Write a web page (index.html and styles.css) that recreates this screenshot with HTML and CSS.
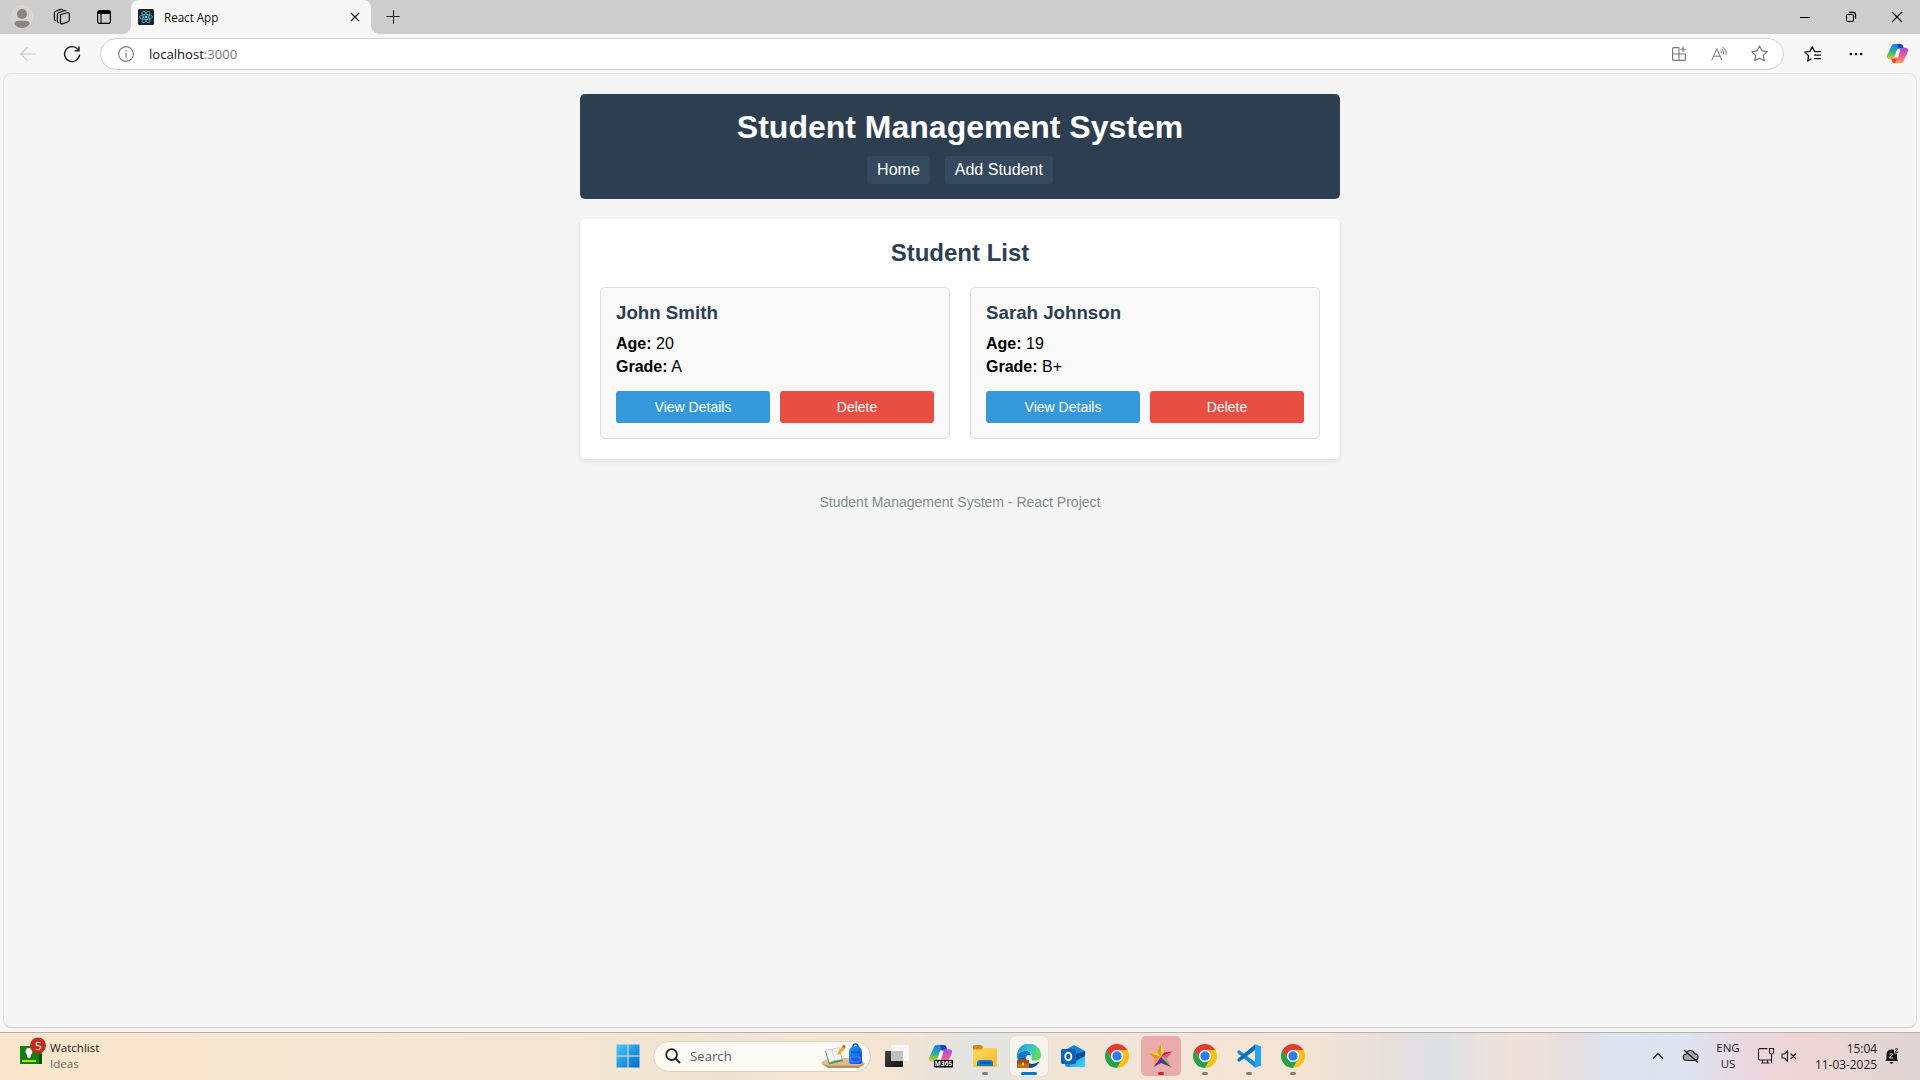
FILE: index.html
```html
<!DOCTYPE html>
<html lang="en">
<head>
<meta charset="utf-8">
<title>React App</title>
<link rel="stylesheet" href="styles.css">
</head>
<body>
<svg class="defs" width="0" height="0" aria-hidden="true">
  <defs>
    <linearGradient id="win" x1="0" y1="0" x2="1" y2="1"><stop offset="0" stop-color="#4cc8fb"/><stop offset="1" stop-color="#0069c8"/></linearGradient>
    <linearGradient id="copL" x1="0" y1="0" x2="0" y2="1"><stop offset="0" stop-color="#1d7de6"/><stop offset=".45" stop-color="#22a5b8"/><stop offset=".75" stop-color="#7fc24a"/><stop offset="1" stop-color="#f3c71f"/></linearGradient>
    <linearGradient id="copR" x1="0" y1="0" x2="0" y2="1"><stop offset="0" stop-color="#a24be0"/><stop offset=".5" stop-color="#ec5a94"/><stop offset="1" stop-color="#fd9c5a"/></linearGradient>
    <linearGradient id="folder" x1="0" y1="0" x2="1" y2="1"><stop offset="0" stop-color="#ffdc69"/><stop offset="1" stop-color="#fbb92a"/></linearGradient>
    <linearGradient id="edgeTop" x1="0" y1="0" x2="1" y2=".3"><stop offset="0" stop-color="#1b8fd6"/><stop offset=".5" stop-color="#2fbfd3"/><stop offset="1" stop-color="#5fdc5a"/></linearGradient>
    <linearGradient id="bag" x1="0" y1="0" x2="1" y2="1"><stop offset="0" stop-color="#1aa0ff"/><stop offset="1" stop-color="#0748d8"/></linearGradient>
    <linearGradient id="dark" x1="0" y1="0" x2="1" y2="1"><stop offset="0" stop-color="#444"/><stop offset="1" stop-color="#111"/></linearGradient>
    <linearGradient id="outl" x1="0" y1="0" x2="1" y2="1"><stop offset="0" stop-color="#1a86dc"/><stop offset="1" stop-color="#41d8fb"/></linearGradient>
    <symbol id="copilot" viewBox="0 0 24 24" preserveAspectRatio="none">
      <path d="M6 2.5Q7 1 9 1H15Q17 1 17.6 3L18.4 6H14Q12 6 11.3 8.2L9.2 15Q8 18.5 5 18.5H4Q0 18.5 1.2 14Z" fill="url(#copL)"/>
      <path d="M11.5 1H15Q17 1 17.6 3L18.4 6H14Q13 6 12.4 6.6Z" fill="#1745c4"/>
      <path d="M18 21.5Q17 23 15 23H9Q7 23 6.4 21L5.6 18Q9 18 10 14.8L12.6 8.5Q13.8 5.5 17 5.5H20Q24 5.5 22.8 10Z" fill="url(#copR)"/>
      <path d="M5.6 18H10L11 17.5 9.5 23H9Q7 23 6.4 21Z" fill="#e8412f"/>
      <path d="M12 7.5H15L12.5 16.5H9.3Z" fill="#fff"/>
    </symbol>
    <symbol id="chrome" viewBox="0 0 24 24">
      <path d="M1.6 6A12 12 0 0 1 22.4 6H12A6 6 0 0 0 6.8 15Z" fill="#e33b2e"/>
      <path d="M22.4 6A12 12 0 0 1 12 24L17.2 15A6 6 0 0 0 12 6Z" fill="#fcc117"/>
      <path d="M12 24A12 12 0 0 1 1.6 6L6.8 15A6 6 0 0 0 17.2 15Z" fill="#26a148"/>
      <circle cx="12" cy="12" r="5.9" fill="#fff"/><circle cx="12" cy="12" r="4.7" fill="#2f7de9"/>
    </symbol>
  </defs>
</svg>

<div class="browser">
  <div class="tabstrip">
    <div class="slot avatar-slot"><svg width="22" height="24" viewBox="0 0 22 24"><ellipse cx="11" cy="12" rx="10.5" ry="11.3" fill="#d6d3d0" stroke="#dfdcd8" stroke-width=".8"/><circle cx="11" cy="9" r="5" fill="#8b8682"/><path d="M3 18.5Q4 15.8 7 15.8H15Q18 15.8 19 18.5Q16 23 11 23T3 18.5Z" fill="#8b8682"/></svg></div>
    <div class="slot space-slot"><svg width="18" height="18" viewBox="0 0 18 18" fill="none" stroke="#111" stroke-width="1.2" stroke-linejoin="round"><path d="M7.5 6.8L14 4.7Q16.3 4.3 16.3 6V12Q16.3 13.3 15 13.8L9.5 15.9Q7.500 16.2 7.5 14.5Z"/><path d="M6.3 14.5Q4.4 14.8 4.4 12.8V6.5Q4.4 5.3 5.6 4.7L11 2.6Q12.8 2.2 13.2 3.4"/><path d="M3.2 12.8Q1.4 12.6 1.4 11V5Q1.4 3.8 2.6 3.2L7.5 1.4Q9.4.9 10 1.9"/></svg></div>
    <div class="slot tabs-slot"><svg width="16" height="16" viewBox="0 0 16 16"><rect x="1.6" y="1.6" width="12.8" height="12.8" rx="2.2" fill="none" stroke="#000" stroke-width="1.2"/><path d="M1.6 5V3.5Q1.6 1.6 3.5 1.6H12.5Q14.4 1.6 14.4 3.5V5Z"/><path d="M5 5V14" stroke="#000" stroke-width="1.1"/></svg></div>
    <div class="tab">
      <svg class="favicon" width="16" height="16" viewBox="0 0 16 16"><rect width="16" height="16" rx="1.5" fill="#20232a"/><g fill="none" stroke="#58bfd8" stroke-width=".8"><ellipse cx="8" cy="8" rx="6.5" ry="2.5"/><ellipse cx="8" cy="8" rx="6.5" ry="2.5" transform="rotate(60 8 8)"/><ellipse cx="8" cy="8" rx="6.5" ry="2.5" transform="rotate(120 8 8)"/></g><circle cx="8" cy="8" r="1.3" fill="#7bdcf0"/></svg>
      <span class="tab-title">React App</span>
      <svg class="tab-close" width="10" height="10" viewBox="0 0 10 10"><path d="M1 1L9 9M9 1L1 9" stroke="#222" stroke-width="1.3"/></svg>
    </div>
    <svg class="new-tab" width="14" height="14" viewBox="0 0 14 14"><path d="M7.5 .3V13.7M.3 6.5H13.7" stroke="#222" stroke-width="1.1"/></svg>
    <div class="window-buttons">
      <svg width="12" height="12" viewBox="0 0 12 12"><path d="M1 6.5H11" stroke="#000"/></svg>
      <svg width="12" height="12" viewBox="0 0 12 12" fill="none" stroke="#000" stroke-width="1.1"><rect x="1.5" y="3.5" width="7" height="7" rx="1.5"/><path d="M4 1.4H8.2Q10.6 1.4 10.6 3.8V8"/></svg>
      <svg width="12" height="12" viewBox="0 0 12 12"><path d="M1 1L11 11M11 1L1 11" stroke="#000" stroke-width="1.1"/></svg>
    </div>
  </div>

  <div class="toolbar">
    <div class="slot back-slot"><svg width="16" height="16" viewBox="0 0 16 16" fill="none" stroke="#c4c4c4" stroke-width="1.1"><path d="M16 8H.8M7.5 1.2L.8 8L7.5 14.8"/></svg></div>
    <div class="slot reload-slot"><svg width="18" height="18" viewBox="0 0 18 18" fill="none" stroke="#1a1a1a" stroke-width="1.4"><path d="M16.6 9.5A7.5 7.5 0 1 1 14.8 4.2L16 5.5M16 1.2V5.7H11.5"/></svg></div>
    <div class="address">
      <svg class="info" width="16" height="16" viewBox="0 0 16 16"><circle cx="8" cy="8" r="7.4" fill="none" stroke="#767676" stroke-width="1.1"/><path d="M8 7V11.5M8 4.3V5.6" stroke="#767676" stroke-width="1.2"/></svg>
      <span class="url">localhost<span class="port">:3000</span></span>
      <div class="address-actions">
        <svg width="16" height="16" viewBox="0 0 16 16" fill="none" stroke="#757575" stroke-width="1.1"><path d="M8 1.6H2.6Q1.6 1.6 1.6 2.6V13.4Q1.6 14.4 2.6 14.4H13.4Q14.4 14.4 14.4 13.4V8H1.6M8 1.6V14.4M12 .5V6M9.3 3.2H14.8"/></svg>
        <svg width="17" height="16" viewBox="0 0 17 16" fill="none" stroke="#757575" stroke-width="1"><path d="M.8 14.200L5.800 2.600L10.800 14.200M2.500 10.200H9.100M9.300 4.300Q10.600 5.400 10.400 7.200M10.300 2.600Q13 4.400 12.600 8M11.400.8Q15.600 3.600 15 8.600"/></svg>
        <svg width="17" height="17" viewBox="0 0 16 16" fill="none" stroke="#757575" stroke-width="1.1" stroke-linejoin="round"><path d="M8 .9L10.2 5.5L15.3 6.2L11.6 9.7L12.5 14.8L8 12.4L3.5 14.8L4.4 9.7L.7 6.2L5.8 5.5Z"/></svg>
      </div>
    </div>
    <div class="browser-actions">
      <svg width="17" height="16" viewBox="0 0 17 16" fill="none" stroke="#111" stroke-width="1.3" stroke-linejoin="round"><path d="M12 5.6L10.5 5.4L8.2.8L6 5.4L.8 6.1L4.6 9.7L3.7 15L7.5 12.8M11 5.6H17M10 9.1H17M10 12.6H17"/></svg>
      <svg width="14" height="4" viewBox="0 0 14 4"><circle cx="1.8" cy="2" r="1.3"/><circle cx="7" cy="2" r="1.3"/><circle cx="12.2" cy="2" r="1.3"/></svg>
      <svg width="23" height="21"><use href="#copilot" width="23" height="21"/></svg>
    </div>
  </div>

  <main class="viewport">
    <div class="app">
      <header class="app-header">
        <h1>Student Management System</h1>
        <nav class="app-nav"><a>Home</a><a>Add Student</a></nav>
      </header>
      <section class="student-list">
        <h2>Student List</h2>
        <div class="cards">
          <article class="card">
            <h3>John Smith</h3>
            <p><strong>Age:</strong> 20</p>
            <p><strong>Grade:</strong> A</p>
            <div class="card-actions"><button class="btn view">View Details</button><button class="btn delete">Delete</button></div>
          </article>
          <article class="card">
            <h3>Sarah Johnson</h3>
            <p><strong>Age:</strong> 19</p>
            <p><strong>Grade:</strong> B+</p>
            <div class="card-actions"><button class="btn view">View Details</button><button class="btn delete">Delete</button></div>
          </article>
        </div>
      </section>
      <footer class="app-footer">Student Management System - React Project</footer>
    </div>
  </main>
</div>

<div class="taskbar">
  <div class="widgets">
    <svg width="26" height="28" viewBox="0 0 26 28"><rect y="9" width="22" height="18" fill="#118011"/><path d="M19 17H22V27H19Z" fill="#075407"/><circle cx="9" cy="14.5" r="3.4" fill="#fff"/><path d="M7 16H11V20L9 21.5L7 20Z" fill="#fff"/><path d="M2 23H16V25H2Z" fill="#b9e000"/><circle cx="18" cy="8.5" r="8" fill="#c42b1c"/><text class="badge" x="18.2" y="12.5" text-anchor="middle">5</text></svg>
    <div class="widget-text"><span>Watchlist</span><span class="muted">Ideas</span></div>
  </div>
  <div class="apps">
    <div class="app-icon"><svg width="24" height="24" viewBox="0 0 24 24"><path d="M.5.5H11.5V11.5H.5ZM12.5.5H23.5V11.5H12.5ZM.5 12.5H11.5V23.5H.5ZM12.5 12.5H23.5V23.5H12.5Z" fill="url(#win)"/></svg></div>
    <div class="search">
      <svg width="16" height="16" viewBox="0 0 16 16" fill="none" stroke="#222" stroke-width="1.8"><circle cx="6.6" cy="6.6" r="5.4"/><path d="M10.5 10.5L15 15"/></svg>
      <span>Search</span>
      <svg class="search-art" width="44" height="26" viewBox="0 0 44 26"><path d="M0 20Q3 16 12 15H34Q42 16 43.5 20L38 24H7Z" fill="#e3bc8e"/><path d="M0 20.5L7 22.5H38L43.5 20V21L38 25H7Z" fill="#bd8f5e"/><path d="M4 8L18 5L22 18L8 21.5Z" fill="#3f9e53"/><path d="M4.500 6.5L11 6L18 4.5L21 16.5L14 17.5L8.5 19.5Z" fill="#f3f2f7" stroke="#b9b7c7" stroke-width=".5"/><path d="M11 6L14 17.5" stroke="#ccc" stroke-width=".7"/><path d="M16 12L17 9L21.5 3.5L24 5.5L19 11Z" fill="#fba61c"/><path d="M21 4L22.5 1.5L24.500 3L24 5.5Z" fill="#ed4b3e"/><path d="M32 4Q32 1 34.5 1T37 4" fill="none" stroke="#0a56c8" stroke-width="1.6"/><path d="M28 10Q28 3 34.500 3T41 10V19Q41 21 39 21H30Q28 21 28 19Z" fill="url(#bag)"/><path d="M30 14H39V17Q39 19 37 19H32Q30 19 30 17Z" fill="#2453ef" stroke="#6e9dff" stroke-width=".7"/><path d="M30 9H39" stroke="#0746b0"/></svg>
    </div>
    <div class="app-icon"><svg width="24" height="22" viewBox="0 0 24 22"><rect y="6" width="18" height="16" rx="1" fill="url(#dark)"/><rect x="6" width="18" height="16" rx="1" fill="#f7f7f7"/><path d="M6 6H18V16H6Z" fill="#c0c0bf"/></svg></div>
    <div class="app-icon"><svg width="26" height="24" viewBox="0 0 26 24"><use href="#copilot" width="25" height="23"/><rect x="6" y="16" width="19" height="7.500" rx=".8"/><text class="m365" x="15.5" y="22" text-anchor="middle">M365</text></svg></div>
    <div class="app-icon open"><svg width="24" height="22" viewBox="0 0 24 22"><path d="M0 1.5Q0 0 1.5 0H8L11 3H22.5Q24 3 24 4.5V20.5Q24 22 22.5 22H1.5Q0 22 0 20.5Z" fill="url(#folder)"/><path d="M0 1.5Q0 0 1.5 0H8L10 2L8.5 4.5H0Z" fill="#d58c08"/><path d="M4 21V18Q4 15 7 15H17Q20 15 20 18V21Z" fill="#1379cb"/><path d="M7 18H17" stroke="#0a589e" stroke-width="1.5"/></svg></div>
    <div class="app-icon active"><svg width="24" height="24" viewBox="0 0 24 24"><path d="M0 12Q2 7 9 6.800Q14 7.500 14 11.500Q9.500 9.500 9 14Q9 19.500 15 20Q19 20 22.500 17.500Q19 24 12 24Q1 24 0 12Z" fill="#1178c8"/><path d="M9 14Q9 19.500 15 20Q19 20 22.500 17.500Q19 24 12 24Q8 23 8 17Z" fill="#0d4a94"/><path d="M0 12A12 12 0 0 1 24 11Q24 16.500 18.500 16.800Q14 17 14.500 14.500Q15.500 7 9 6.800Q3 6.800 0 12Z" fill="url(#edgeTop)"/><path d="M0 16H12V24H0Z" fill="#c96a16"/><path d="M0 16H12V19.5H0Z" fill="#a34f0a"/><path d="M4 16V14.500H8V16" fill="none" stroke="#7b3b08"/><rect x="5" y="18.5" width="2" height="3" fill="#ffd04a"/></svg></div>
    <div class="app-icon"><svg width="24" height="22" viewBox="0 0 24 22"><path d="M4 5L13 0L24 6V19.5Q24 22 21.5 22H7Q4 22 4 19Z" fill="#1684d8"/><path d="M24 7V19.500Q24 22 21.5 22H7L24 10Z" fill="url(#outl)"/><path d="M14 9L24 6.5V11L14 16Z" fill="#0c4d96"/><rect y="4" width="15" height="15" rx="1.5" fill="#0f62b8"/><ellipse cx="7.3" cy="11.5" rx="3" ry="3.7" fill="none" stroke="#fff" stroke-width="1.9"/></svg></div>
    <div class="app-icon"><svg width="24" height="24"><use href="#chrome"/></svg></div>
    <div class="app-icon alert"><svg width="24" height="24" viewBox="0 0 24 24"><path d="M12 0L12 13L8.5 8.5Z" fill="#d89b12"/><path d="M12 0L15 8.5L12 13Z" fill="#ffd83d"/><path d="M.5 9L8.5 8.5L12 13Z" fill="#ffcf24"/><path d="M.5 9L12 13L6 15Z" fill="#e88b1a"/><path d="M15 8.5L23.5 7.5L12 13Z" fill="#c9224a"/><path d="M23.5 7.5L18 14L12 13Z" fill="#e95878"/><path d="M6 15L12 13L4.5 23Z" fill="#ff9a32"/><path d="M12 13L12 19L4.5 23Z" fill="#5425d6"/><path d="M12 13L18 14L22 23Z" fill="#a0a0a0"/><path d="M12 13L22 23L12 19Z" fill="#4a4a4a"/></svg></div>
    <div class="app-icon open"><svg width="24" height="24"><use href="#chrome"/></svg></div>
    <div class="app-icon open"><svg width="24" height="24" viewBox="0 0 24 24"><path d="M2 6L18 18V23.5L.5 9V7.5Z" fill="#1089d6"/><path d="M2 18L18 6V.5L.5 15V16.5Z" fill="#0870b8"/><path d="M18 0L24 2.5V21.500L18 24Z" fill="#25a3ee"/></svg></div>
    <div class="app-icon open"><svg width="24" height="24"><use href="#chrome"/></svg></div>
  </div>
  <div class="tray">
    <svg width="12" height="8" viewBox="0 0 12 8"><path d="M1 6.7L6 1.5L11 6.7" fill="none" stroke="#222" stroke-width="1.3"/></svg>
    <svg class="cloud" width="18" height="14" viewBox="0 0 18 14"><path d="M5 11.5H12.5Q16 11 16 8T12.5 4.7Q11.5 1.5 8.3 1.5T4.3 5Q1.2 5.2 1.2 8.2T5 11.5Z" fill="#a5a6a9" stroke="#222" stroke-width="1.2"/><path d="M2 1L16 13.5" stroke="#222" stroke-width="1.4"/></svg>
    <div class="lang"><span>ENG</span><span>US</span></div>
    <svg class="net" width="18" height="18" viewBox="0 0 18 18" fill="none" stroke="#222" stroke-width="1.1"><path d="M10.500 1.6H3Q1.5 1.6 1.5 3V11.5Q1.5 13 3 13H14.5M5.500 13V16M10.5 13V16M4 16H12.5M12.5 1.5H16.5V5.5Q16.5 7 14.5 7T12.5 5.5ZM14.5 7V16"/></svg>
    <svg class="sound" width="16" height="12" viewBox="0 0 16 12" fill="none" stroke="#222" stroke-width="1.1"><path d="M1 4H3.5L6.5 1V11L3.5 8H1ZM9.5 3.5L15 9M15 3.5L9.5 9"/></svg>
    <div class="clock"><span>15:04</span><span>11-03-2025</span></div>
    <svg class="bell" width="14" height="16" viewBox="0 0 14 16"><path d="M1.5 11V6Q2 1.500 6.5 1.5H9V5.500H12V11L13 13H0ZM4.5 14H8.5Q8 15.7 6.5 15.7T4.5 14Z" fill="#151515"/><path d="M4.500 6H7.800L4.500 10H8" fill="none" stroke="#eadbd9" stroke-width="1"/><path d="M10 1H13L10 4.200H13.300" fill="none" stroke="#151515" stroke-width="1"/></svg>
  </div>
</div>
</body>
</html>
```
FILE: styles.css
```css
* { box-sizing: border-box; margin: 0; padding: 0; }

body {
  width: 1920px;
  height: 1080px;
  overflow: hidden;
  display: flex;
  flex-direction: column;
  font-family: "Open Sans", "Noto Sans", sans-serif;
}

svg { display: block; flex: none; }
.defs { position: absolute; }

/* Browser chrome */
.browser {
  height: 1032px;
  display: flex;
  flex-direction: column;
  background: #f7f7f7;
}

.tabstrip {
  height: 34px;
  flex: none;
  display: flex;
  align-items: center;
  background: #cdcdcd;
}

.slot { display: flex; justify-content: center; flex: none; }
.avatar-slot { width: 44px; }
.space-slot { width: 36px; }
.tabs-slot { width: 48px; }

.tab {
  width: 240px;
  height: 34px;
  margin-left: 3px;
  padding: 0 11px 0 7px;
  display: flex;
  align-items: center;
  background: #f7f7f7;
  border-radius: 8px 8px 0 0;
  position: relative;
}

.tab::before,
.tab::after {
  content: "";
  position: absolute;
  bottom: 0;
  width: 8px;
  height: 8px;
}
.tab::before { left: -8px; background: radial-gradient(circle at 0 0, transparent 7.5px, #f7f7f7 8px); }
.tab::after { right: -8px; background: radial-gradient(circle at 100% 0, transparent 7.5px, #f7f7f7 8px); }

.tab-title { margin-left: 10px; padding-bottom: 1px; font-size: 11.7px; letter-spacing: -0.05px; color: #111; }
.tab-close { margin-left: auto; }
.new-tab { margin-left: 15px; }

.window-buttons { margin-left: auto; display: flex; }
.window-buttons svg { margin: 0 17px; }

.toolbar {
  height: 39px;
  flex: none;
  display: flex;
  align-items: center;
}
.back-slot { width: 56px; }
.reload-slot { width: 32px; }

.address {
  width: 1684px;
  height: 32px;
  margin-left: 12px;
  padding: 0 15px 0 17px;
  display: flex;
  align-items: center;
  background: #fff;
  border: 1px solid #cfcfcf;
  border-radius: 16px;
}
.url { margin-left: 15px; font-size: 13.1px; color: #111; }
.port { color: #767676; }
.address-actions { margin-left: auto; display: flex; align-items: center; gap: 23.5px; }

.browser-actions { display: flex; align-items: center; margin-left: 20px; gap: 28px; }
.browser-actions svg:last-child { margin-left: -5px; }

.viewport {
  flex: 1;
  margin: 0 3px 4px;
  padding-top: 20px;
  background: #f5f5f5;
  border: 1px solid #e2e2e2;
  border-bottom-color: #cfcfcf;
  border-radius: 8px;
}

/* Student management app */
.app {
  width: 760px;
  margin: 0 auto;
  font-family: "Liberation Sans", Arial, sans-serif;
  font-size: 16px;
  color: #000;
}

.app-header {
  height: 105px;
  padding: 15px;
  text-align: center;
  color: #fff;
  background: #2c3e50;
  border-radius: 5px;
}
.app-header h1 { font-size: 32px; line-height: 36px; margin-bottom: 11px; }
.app-nav { display: flex; justify-content: center; gap: 15px; }
.app-nav a { padding: 5px 10px; line-height: 18px; background: #34495e; border-radius: 3px; }

.student-list {
  margin-top: 20px;
  padding: 20px;
  background: #fff;
  border-radius: 5px;
  box-shadow: 0 2px 5px rgba(0, 0, 0, 0.1);
}
.student-list h2 {
  margin-bottom: 20px;
  font-size: 24px;
  line-height: 28px;
  text-align: center;
  color: #2c3e50;
}

.cards { display: grid; grid-template-columns: 1fr 1fr; gap: 20px; }
.card {
  height: 152px;
  padding: 15px;
  background: #f9f9f9;
  border: 1px solid #ddd;
  border-radius: 5px;
}
.card h3 { margin-bottom: 12px; font-size: 18.72px; line-height: 20px; color: #2c3e50; }
.card p { margin-bottom: 5px; line-height: 18px; }
.card-actions { display: flex; gap: 10px; margin-top: 15px; }
.btn {
  flex: 1;
  height: 32px;
  border: 0;
  border-radius: 3px;
  font-family: inherit;
  font-size: 14px;
  color: #fff;
}
.view { background: #3598db; }
.delete { background: #e94e43; }

.app-footer {
  margin-top: 35px;
  font-size: 14px;
  line-height: 16px;
  text-align: center;
  color: #7f8c8d;
}

/* Windows taskbar */
.taskbar {
  height: 48px;
  display: grid;
  grid-template-columns: 606px 1fr auto;
  border-top: 1px solid #b9b0a8;
  background: linear-gradient(90deg,
    #fae6ca 0, #f6e6d0 15%, #f4e5d4 30%, #efe4d3 38%, #f4e5d5 41%, #f3e4d4 47%,
    #e1e4e3 51%, #f1e5d8 55%, #f4e4d5 68%, #e6e0dc 72%, #dfe1e6 75%, #efe2d9 79%,
    #e5dfe2 82%, #dce4f0 84%, #dde3ef 88%, #ead7df 91%, #edd5d4 94%, #e4d6d5 98%, #dfd5d4 100%);
}

.widgets { display: flex; padding: 4px 0 0 20px; }
.badge { font-size: 11.5px; fill: #fff; }
.m365 { font-size: 6.5px; font-weight: 700; fill: #fff; }
.widget-text {
  display: flex;
  flex-direction: column;
  margin: 3px 0 0 4px;
  font-size: 11.6px;
  line-height: 16px;
  color: #222;
}
.muted { color: #6a625b; }

.apps { height: 46px; display: flex; align-items: center; }
.app-icon {
  width: 44px;
  height: 46px;
  display: flex;
  align-items: center;
  justify-content: center;
  position: relative;
}
.open::after,
.active::after,
.alert::after {
  content: "";
  position: absolute;
  bottom: 4px;
  left: 19px;
  width: 6px;
  height: 3px;
  border-radius: 2px;
  background: #847c75;
}

.active,
.alert {
  height: 40px;
  border-radius: 5px;
}
.active { width: 38px; margin: 0 3px; background: #f6f3ee; box-shadow: 0 0 1px #b9b0a8; }
.alert { width: 40px; margin: 0 2px; background: #e9acaa; }
.active::after { left: 11px; bottom: 1px; width: 16px; background: #0078d4; }
.alert::after { left: 17px; bottom: 1px; background: #c42b1c; }

.search {
  width: 218px;
  height: 31px;
  margin: 0 4px 0 3px;
  padding: 0 5px 0 11px;
  display: flex;
  align-items: center;
  background: #fcf8f2;
  border: 1px solid #e0d0bd;
  border-radius: 16px;
}
.search span { margin-left: 9px; font-size: 13.2px; color: #5f5c59; }
.search-art { margin-left: auto; }

.tray {
  width: 268px;
  height: 46px;
  display: flex;
  align-items: center;
  font-size: 11.5px;
  line-height: 16px;
  color: #1c1c1c;
}
.cloud { margin-left: 18px; }
.lang { width: 28px; margin-left: 14px; display: flex; flex-direction: column; align-items: center; }
.net { margin-left: 15px; }
.sound { margin-left: 6px; }
.clock { margin-left: auto; display: flex; flex-direction: column; align-items: flex-end; font-size: 11.9px; }
.bell { margin: 0 21px 0 8px; }
```
